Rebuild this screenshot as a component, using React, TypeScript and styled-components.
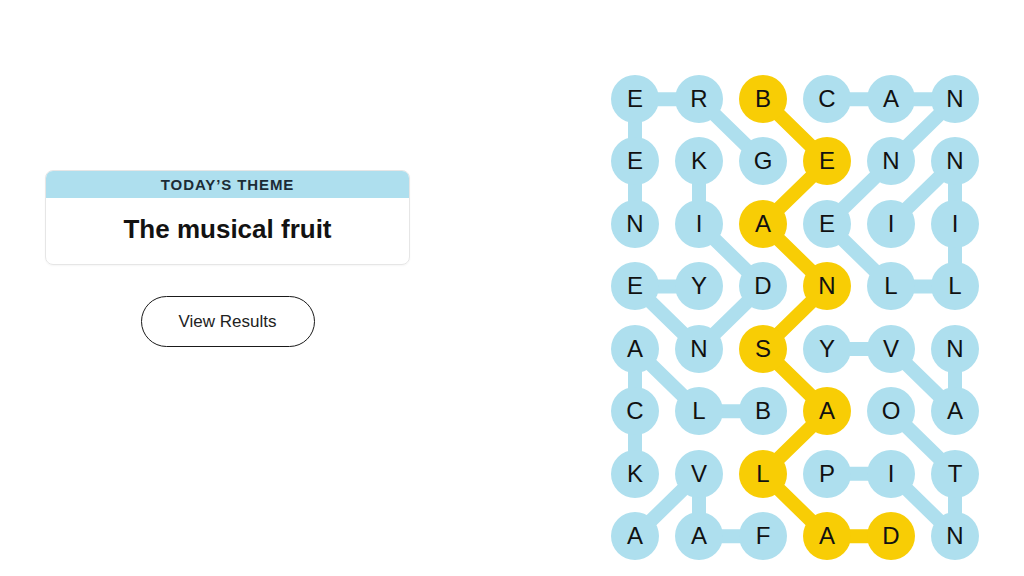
import React from 'react'
import styled, { createGlobalStyle } from 'styled-components'

const GlobalStyle = createGlobalStyle`
  html, body {
    margin: 0;
    padding: 0;
    background: #ffffff;
  }
  body {
    font-family: "Liberation Sans", Arial, sans-serif;
    color: #000;
  }
`

const BLUE = '#aedfee'
const YELLOW = '#f8cd05'
const COL_W = 64
const ROW_H = 62.43
const DOT = 48

const LETTERS = [
  'ERBCAN',
  'EKGENN',
  'NIAEII',
  'EYDNLL',
  'ANSYVN',
  'CLBAOA',
  'KVLPIT',
  'AAFADN',
]

type Cell = [number, number]

// found words, each as a path of [row, col]
const WORDS: { path: Cell[]; spangram?: boolean }[] = [
  { path: [[1, 2], [0, 1], [0, 0], [1, 0], [2, 0]] }, // GREEN
  { path: [[1, 1], [2, 1], [3, 2], [4, 1], [3, 0], [3, 1]] }, // KIDNEY
  { path: [[0, 3], [0, 4], [0, 5], [1, 4], [2, 3], [3, 4], [3, 5], [2, 5], [1, 5], [2, 4]] }, // CANNELLINI
  { path: [[4, 5], [5, 5], [4, 4], [4, 3]] }, // NAVY
  { path: [[6, 3], [6, 4], [7, 5], [6, 5], [5, 4]] }, // PINTO
  { path: [[5, 2], [5, 1], [4, 0], [5, 0], [6, 0]] }, // BLACK
  { path: [[7, 2], [7, 1], [6, 1], [7, 0]] }, // FAVA
  {
    path: [[0, 2], [1, 3], [2, 2], [3, 3], [4, 2], [5, 3], [6, 2], [7, 3], [7, 4]],
    spangram: true,
  }, // BEANSALAD
]

const spanCells = new Set(
  WORDS.filter((w) => w.spangram).flatMap((w) => w.path.map(([r, c]) => `${r}-${c}`))
)

const Page = styled.main`
  display: flex;
  align-items: flex-start;
  width: 1024px;
  height: 576px;
  overflow: hidden;
`

const Side = styled.section`
  width: 363px;
  margin: 170px 0 0 46px;
  display: flex;
  flex-direction: column;
  align-items: center;
  gap: 31px;
`

const ThemeCard = styled.div`
  width: 100%;
  border: 1px solid #e6e6e6;
  border-radius: 8px;
  overflow: hidden;
  box-shadow: 0 1px 2px rgba(0, 0, 0, 0.04);
`

const ThemeLabel = styled.div`
  background: ${BLUE};
  height: 27px;
  display: flex;
  align-items: center;
  justify-content: center;
  font-size: 15px;
  font-weight: 700;
  letter-spacing: 0.9px;
  color: #1c2b36;
`

const ThemeTitle = styled.h2`
  margin: 0;
  height: 66px;
  display: flex;
  align-items: center;
  justify-content: center;
  font-size: 26px;
  font-weight: 700;
  color: #121212;
  padding-bottom: 4px;
  box-sizing: border-box;
`

const PillButton = styled.button`
  width: 174px;
  height: 51px;
  border: 1.5px solid #1a1a1a;
  border-radius: 26px;
  background: #fff;
  font-family: "Liberation Sans", Arial, sans-serif;
  font-size: 17px;
  color: #222;
  cursor: pointer;
`

const Board = styled.div`
  position: relative;
  margin: 67.8px 0 0 194px;
  width: ${COL_W * 6}px;
  height: ${ROW_H * 8}px;
`

const Lines = styled.svg`
  position: absolute;
  inset: 0;
  width: 100%;
  height: 100%;
  overflow: visible;
`

const Grid = styled.div`
  position: relative;
  display: grid;
  grid-template-columns: repeat(6, ${COL_W}px);
  grid-template-rows: repeat(8, ${ROW_H}px);
`

const Letter = styled.button<{ $span: boolean }>`
  justify-self: center;
  align-self: center;
  width: ${DOT}px;
  height: ${DOT}px;
  border: none;
  border-radius: 50%;
  padding: 0;
  background: ${(p) => (p.$span ? YELLOW : BLUE)};
  font-family: "Liberation Sans", Arial, sans-serif;
  font-size: 24px;
  color: #111;
  display: flex;
  align-items: center;
  justify-content: center;
`

const center = ([r, c]: Cell) => [c * COL_W + COL_W / 2, r * ROW_H + ROW_H / 2]

export default function App() {
  return (
    <>
      <GlobalStyle />
      <Page>
        <Side>
          <ThemeCard>
            <ThemeLabel>TODAY’S THEME</ThemeLabel>
            <ThemeTitle>The musical fruit</ThemeTitle>
          </ThemeCard>
          <PillButton>View Results</PillButton>
        </Side>
        <Board>
          <Lines>
            {WORDS.map((w, i) => (
              <polyline
                key={i}
                points={w.path.map((p) => center(p).join(',')).join(' ')}
                fill="none"
                stroke={w.spangram ? YELLOW : BLUE}
                strokeWidth={14}
                strokeLinejoin="round"
              />
            ))}
          </Lines>
          <Grid>
            {LETTERS.map((row, r) =>
              row.split('').map((ch, c) => (
                <Letter key={`${r}-${c}`} $span={spanCells.has(`${r}-${c}`)}>
                  {ch}
                </Letter>
              ))
            )}
          </Grid>
        </Board>
      </Page>
    </>
  )
}
